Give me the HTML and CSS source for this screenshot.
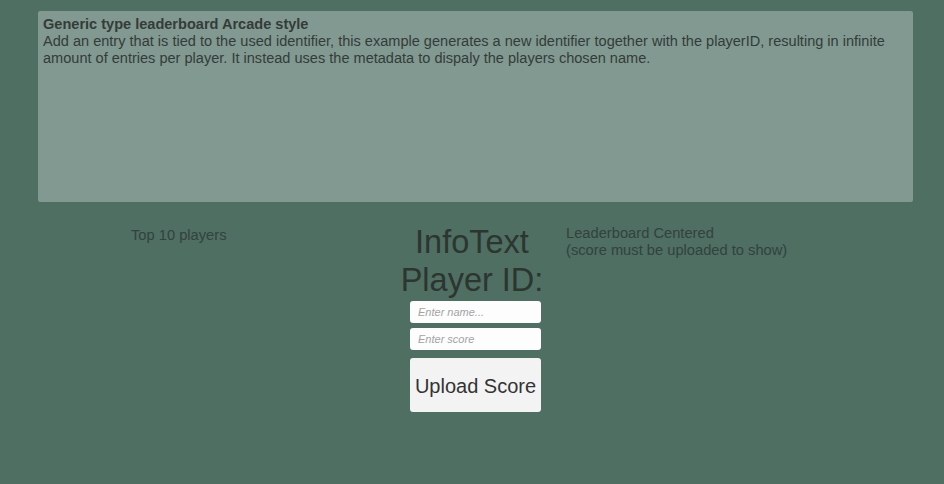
FILE: index.html
```html
<!DOCTYPE html>
<html lang="en">
<head>
<meta charset="utf-8">
<title>Leaderboard</title>
<link rel="stylesheet" href="styles.css">
</head>
<body>
<div class="panel">
  <div class="panel-title">Generic type leaderboard Arcade style</div>
  <div class="panel-text">Add an entry that is tied to the used identifier, this example generates a new identifier together with the playerID, resulting in infinite amount of entries per player. It instead uses the metadata to dispaly the players chosen name.</div>
</div>
<div class="row">
  <div class="col-left">
    <div class="label">Top 10 players</div>
  </div>
  <div class="col-mid">
    <div class="big">InfoText</div>
    <div class="big">Player ID:</div>
    <input class="field" type="text" placeholder="Enter name...">
    <input class="field field-score" type="text" placeholder="Enter score">
    <button class="upload" type="button">Upload Score</button>
  </div>
  <div class="col-right">
    <div class="label">Leaderboard Centered<br>(score must be uploaded to show)</div>
  </div>
</div>
</body>
</html>
```
FILE: styles.css
```css
html, body {
  margin: 0;
  padding: 0;
}
body {
  width: 944px;
  height: 484px;
  background: #4e6f62;
  font-family: "Liberation Sans", Arial, sans-serif;
  overflow: hidden;
}
.panel {
  box-sizing: border-box;
  margin: 11px 31px 0 38px;
  height: 191px;
  padding: 5px 5px;
  background: #819990;
  border-radius: 2px;
  color: #343c39;
  font-size: 14.55px;
  line-height: 17px;
}
.panel-title {
  font-weight: bold;
}
.row {
  display: flex;
  margin-top: 21px;
}
.col-left {
  box-sizing: border-box;
  width: 400px;
  padding-left: 131px;
  padding-top: 4px;
}
.col-mid {
  width: 144px;
  display: flex;
  flex-direction: column;
  align-items: center;
}
.col-right {
  padding-left: 22px;
  padding-top: 2px;
}
.label {
  font-size: 14.7px;
  line-height: 17px;
  color: #33423c;
}
.big {
  font-size: 32.5px;
  line-height: 38px;
  color: #2d3531;
  white-space: nowrap;
}
.field {
  box-sizing: border-box;
  width: 131px;
  height: 22px;
  margin: 2px 0 0 7px;
  padding: 0 8px;
  border: none;
  border-radius: 3px;
  background: #fdfdfd;
  font-family: "Liberation Sans", Arial, sans-serif;
  font-size: 11px;
  font-style: italic;
  outline: none;
}
.field-score {
  margin-top: 5px;
}
.field::placeholder {
  color: #a4a4a4;
}
.upload {
  box-sizing: border-box;
  width: 131px;
  height: 54px;
  margin: 8px 0 0 7px;
  padding: 2px 0 0;
  border: none;
  border-radius: 3px;
  background: #f3f3f3;
  color: #333333;
  font-family: "Liberation Sans", Arial, sans-serif;
  font-size: 20px;
}
```
